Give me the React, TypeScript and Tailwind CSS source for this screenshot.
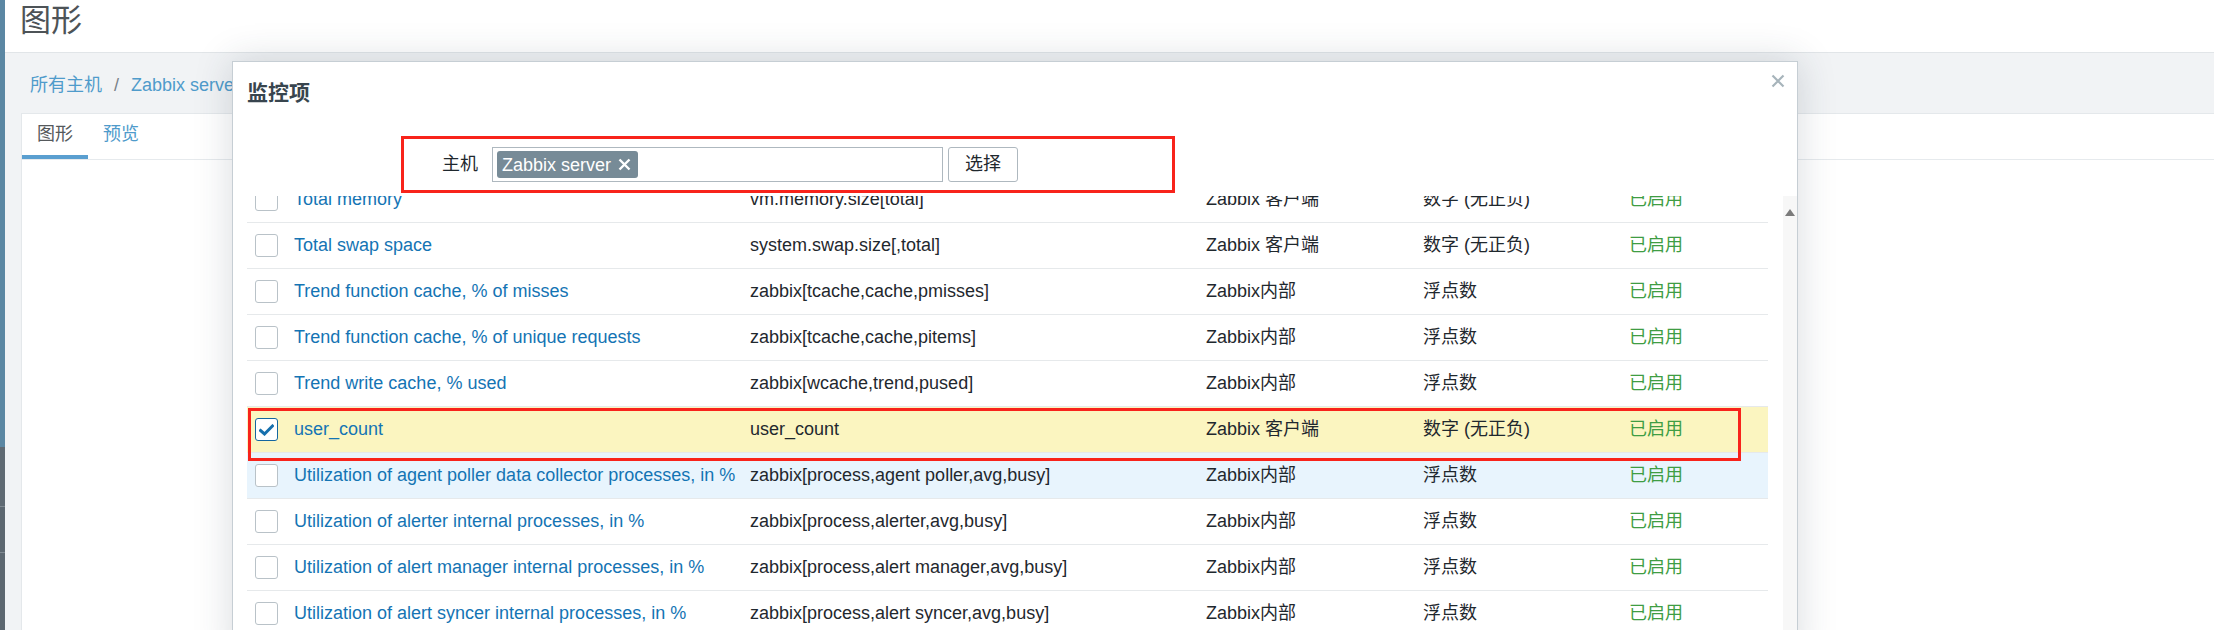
import React from "react";

type Row = {
  name: string;
  key: string;
  type: string;
  vt: string;
  selected?: boolean;
  hover?: boolean;
};

const rows: Row[] = [
  { name: "Total memory", key: "vm.memory.size[total]", type: "Zabbix 客户端", vt: "数字 (无正负)" },
  { name: "Total swap space", key: "system.swap.size[,total]", type: "Zabbix 客户端", vt: "数字 (无正负)" },
  { name: "Trend function cache, % of misses", key: "zabbix[tcache,cache,pmisses]", type: "Zabbix内部", vt: "浮点数" },
  { name: "Trend function cache, % of unique requests", key: "zabbix[tcache,cache,pitems]", type: "Zabbix内部", vt: "浮点数" },
  { name: "Trend write cache, % used", key: "zabbix[wcache,trend,pused]", type: "Zabbix内部", vt: "浮点数" },
  { name: "user_count", key: "user_count", type: "Zabbix 客户端", vt: "数字 (无正负)", selected: true },
  { name: "Utilization of agent poller data collector processes, in %", key: "zabbix[process,agent poller,avg,busy]", type: "Zabbix内部", vt: "浮点数", hover: true },
  { name: "Utilization of alerter internal processes, in %", key: "zabbix[process,alerter,avg,busy]", type: "Zabbix内部", vt: "浮点数" },
  { name: "Utilization of alert manager internal processes, in %", key: "zabbix[process,alert manager,avg,busy]", type: "Zabbix内部", vt: "浮点数" },
  { name: "Utilization of alert syncer internal processes, in %", key: "zabbix[process,alert syncer,avg,busy]", type: "Zabbix内部", vt: "浮点数" },
];

const FONT = "font-['Liberation_Sans','Noto_Sans_CJK_SC',sans-serif]";

function Checkbox({ checked }: { checked?: boolean }) {
  if (checked) {
    return (
      <div className="w-[23px] h-[23px] rounded-[3px] border-[1.5px] border-[#1466a0] bg-white flex items-center justify-center">
        <svg width="15" height="12" viewBox="0 0 15 12">
          <polyline points="1.5,6.5 5.5,10 13.5,2" fill="none" stroke="#1670ad" strokeWidth="3" strokeLinecap="square" />
        </svg>
      </div>
    );
  }
  return <div className="w-[23px] h-[23px] rounded-[3px] border border-[#b9c2c8] bg-white" />;
}

function TableRow({ r }: { r: Row }) {
  const bg = r.selected ? "bg-[#fbf5c0]" : r.hover ? "bg-[#e8f4fd]" : "bg-white";
  return (
    <div className={`relative h-[46px] border-b border-[#e6e9eb] grid grid-cols-[47px_456px_456px_217px_206px_1fr] items-center ${bg}`}>
      <div className="pl-[8px]">
        <Checkbox checked={r.selected} />
      </div>
      <div className="text-[#1474b4] whitespace-nowrap">{r.name}</div>
      <div className="text-[#1f282e] whitespace-nowrap">{r.key}</div>
      <div className="text-[#1f282e] whitespace-nowrap">{r.type}</div>
      <div className="text-[#1f282e] whitespace-nowrap">{r.vt}</div>
      <div className="text-[#3f9d43] whitespace-nowrap">已启用</div>
      {r.selected && (
        <div className="absolute z-10 left-[1px] top-[1px] w-[1493px] h-[53px] border-[3px] border-[#f8231b] pointer-events-none" />
      )}
    </div>
  );
}

export default function App() {
  return (
    <div className={`relative w-[2214px] h-[630px] overflow-hidden flex bg-[#f1f3f5] text-[18px] ${FONT}`}>
      {/* left sidebar strip */}
      <div className="w-[5px] flex flex-col">
        <div className="h-[447px] bg-[#5b87a3]" />
        <div className="h-[60px] bg-[#5f6a73] border-b border-[#808a92]" />
        <div className="h-[46px] bg-[#5c6770] border-b border-[#808a92]" />
        <div className="flex-1 bg-[#5c6770]" />
      </div>

      {/* main */}
      <div className="flex-1 flex flex-col">
        <div className="h-[53px] bg-white border-b border-[#e1e5e8] pl-[15px] pt-[3px]">
          <h1 className="text-[31px] leading-[36px] text-[#4d5357] font-normal">图形</h1>
        </div>
        <div className="h-[60px] pl-[25px] pt-[20px] leading-[24px] text-[#4f9bcb] flex gap-[12px]">
          <span>所有主机</span>
          <span className="text-[#7a8288]">/</span>
          <span>Zabbix server</span>
        </div>
        <div className="ml-[16px] flex-1 bg-white border-l border-t border-[#e4e8eb]">
          <div className="flex border-b border-[#e6eaed]">
            <div className="px-[15px] h-[45px] border-b-4 border-[#5a9fd0] flex items-center text-[#55595c]">图形</div>
            <div className="px-[15px] h-[45px] border-b-4 border-transparent flex items-center text-[#4f9bcb]">预览</div>
          </div>
        </div>
      </div>

      {/* modal dialog */}
      <div className="absolute left-[232px] top-[61px] w-[1566px] h-[600px] bg-white border border-[#c6ced4] shadow-[0_0_36px_rgba(40,55,70,0.18)] flex flex-col">
        <button className="absolute right-[11px] top-[11px] w-[16px] h-[16px] flex items-center justify-center">
          <svg width="14" height="14" viewBox="0 0 14 14">
            <path d="M1.5 1.5 L12.5 12.5 M12.5 1.5 L1.5 12.5" stroke="#a7b4bb" strokeWidth="2.2" />
          </svg>
        </button>
        <div className="pl-[14px] pt-[19px] h-[74px]">
          <h4 className="text-[21px] leading-[24px] font-bold text-[#38454e]">监控项</h4>
        </div>
        <div className="pl-[14px]">
          <div className="ml-[154px] w-[774px] h-[57px] border-[3px] border-[#f8231b] flex items-center pl-[38px]">
            <span className="text-[#1f282e] w-[50px]">主机</span>
            <div className="w-[451px] h-[35px] border border-[#aeb8bf] bg-white flex items-center pl-[4px]">
              <div className="h-[27px] rounded-[3px] bg-[#778b97] text-white flex items-center pl-[5px] pr-[7px] gap-[7px]">
                <span className="leading-[20px]">Zabbix server</span>
                <svg width="13" height="13" viewBox="0 0 13 13">
                  <path d="M1.5 1.5 L11.5 11.5 M11.5 1.5 L1.5 11.5" stroke="#ffffff" strokeWidth="2.4" />
                </svg>
              </div>
            </div>
            <button className="ml-[5px] w-[70px] h-[35px] rounded-[3px] border border-[#aeb8bf] bg-white text-[#1f282e] flex items-center justify-center">
              选择
            </button>
          </div>
        </div>
        <div className="mt-[3px] flex-1 flex overflow-hidden">
          <div className="pl-[14px] w-[1535px] overflow-hidden">
            <div className="-mt-[19px]">
              {rows.map((r, i) => (
                <TableRow key={i} r={r} />
              ))}
            </div>
          </div>
          <div className="ml-[15px] w-[14px] bg-[#f7f7f7] flex justify-center pt-[13px]">
            <svg width="10" height="7" viewBox="0 0 10 7">
              <polygon points="5,0 10,7 0,7" fill="#7b7b7b" />
            </svg>
          </div>
        </div>
      </div>
    </div>
  );
}
